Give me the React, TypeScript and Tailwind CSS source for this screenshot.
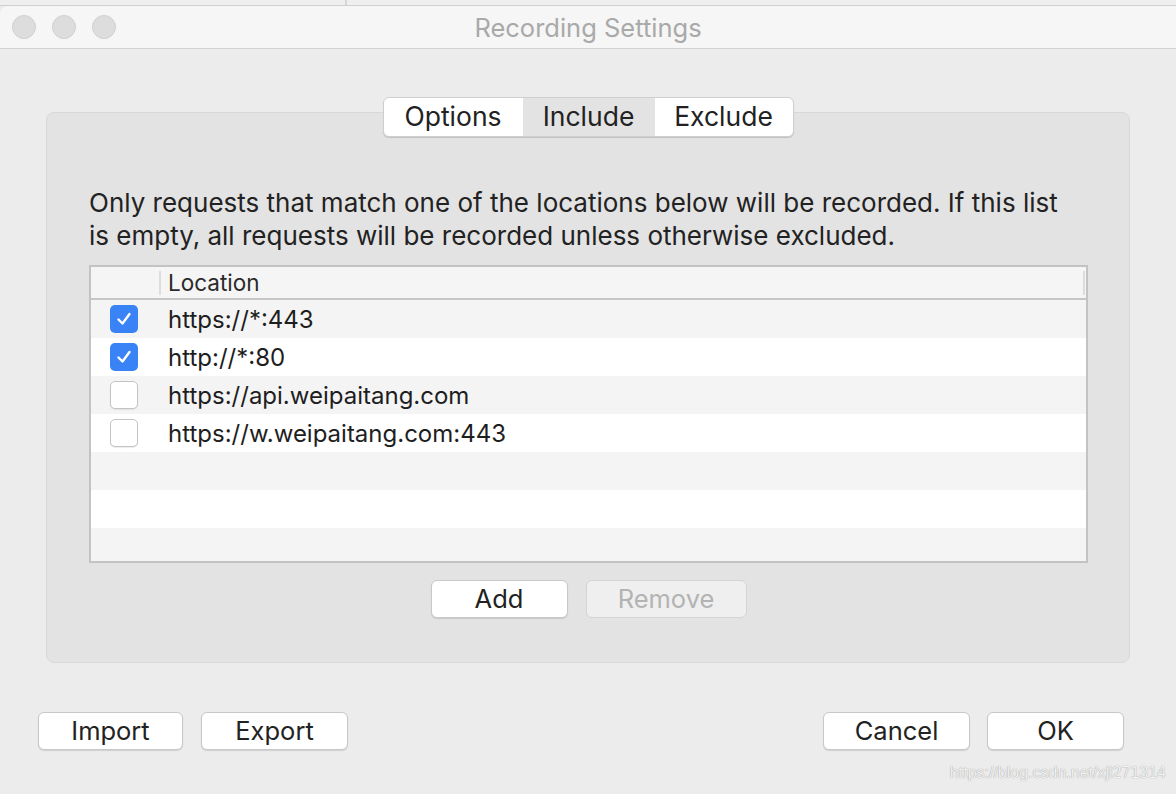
import React from "react";

const font = { fontFamily: 'Inter, "Liberation Sans", Arial, sans-serif' };

function Btn({ label, w, disabled }: { label: string; w: string; disabled?: boolean }) {
  return (
    <div
      className={`${w} h-[38px] flex items-center justify-center rounded-[6px] border text-[25.5px] ${
        disabled
          ? "bg-[#efefef] border-[#d4d4d4] text-[#b3b3b3]"
          : "bg-white border-[#c8c8c8] text-[#222] shadow-[0_1px_1px_rgba(0,0,0,0.12)]"
      }`}
    >
      {label}
    </div>
  );
}

function Check({ on }: { on: boolean }) {
  return on ? (
    <div className="w-[28px] h-[28px] rounded-[5px] bg-[#3a83f7] flex items-center justify-center">
      <svg width="18" height="18" viewBox="0 0 18 18">
        <path d="M3.5 9.5 L7.5 13.5 L14.5 4" fill="none" stroke="white" strokeWidth="2.4" strokeLinecap="round" strokeLinejoin="round" />
      </svg>
    </div>
  ) : (
    <div className="w-[28px] h-[28px] rounded-[5px] bg-white border border-[#c4c4c4] shadow-[0_1px_1px_rgba(0,0,0,0.08)]" />
  );
}

const rows: { on: boolean; text: string }[] = [
  { on: true, text: "https://*:443" },
  { on: true, text: "http://*:80" },
  { on: false, text: "https://api.weipaitang.com" },
  { on: false, text: "https://w.weipaitang.com:443" },
  { on: false, text: "" },
  { on: false, text: "" },
  { on: false, text: "" },
];

export default function App() {
  return (
    <div className="w-[1176px] h-[794px] bg-[#ececec] flex flex-col overflow-hidden relative text-[#222]" style={font}>
      {/* strip above window */}
      <div className="h-[6px] bg-[#efefef] border-b border-[#cfcfcf] flex">
        <div className="w-[347px] border-r-2 border-[#d6d6d6]" />
      </div>
      {/* title bar */}
      <div className="h-[43px] bg-[#f6f6f6] border-b border-[#d2d2d2] grid grid-cols-[1fr_auto_1fr] items-center rounded-tl-[8px]">
        <div className="flex items-center gap-[16px] pl-[12px]">
          <div className="w-[24px] h-[24px] rounded-full bg-[#dddddd] border border-[#d0d0d0]" />
          <div className="w-[24px] h-[24px] rounded-full bg-[#dddddd] border border-[#d0d0d0]" />
          <div className="w-[24px] h-[24px] rounded-full bg-[#dddddd] border border-[#d0d0d0]" />
        </div>
        <div className="text-[25.5px] text-[#a9a9a9] pt-[3px]">Recording Settings</div>
        <div />
      </div>
      {/* body */}
      <div className="flex flex-col items-center pt-[48px]">
        <div className="relative z-10 flex h-[40px] rounded-[6px] bg-white border border-[#cfcfcf] shadow-[0_1px_1px_rgba(0,0,0,0.15)] overflow-hidden text-[26.5px]">
          <div className="w-[139px] flex items-center justify-center">Options</div>
          <div className="w-[132px] flex items-center justify-center bg-[#e3e3e3]">Include</div>
          <div className="w-[138px] flex items-center justify-center">Exclude</div>
        </div>
        <div className="-mt-[25px] w-[1084px] h-[551px] bg-[#e3e3e3] border border-[#d8d8d8] rounded-[8px] flex flex-col pl-[42px] pt-[73px]">
          <div className="text-[26px] leading-[33px] w-[990px]">
            Only requests that match one of the locations below will be recorded. If this list is empty, all requests will be recorded unless otherwise excluded.
          </div>
          <div className="mt-[13px] w-[999px] h-[298px] border-2 border-[#c3c3c3] bg-[#f4f4f4] flex flex-col overflow-hidden">
            <div className="h-[33px] shrink-0 bg-[#f5f5f5] border-b-2 border-[#c6c6c6] flex items-center relative">
              <div className="w-[70px] h-[24px] border-r-2 border-[#dedede]" />
              <div className="pl-[7px] text-[22.5px] text-[#2a2a2a] flex-1">Location</div>
              <div className="w-[2px] h-[24px] bg-[#dcdcdc] mr-[1px]" />
            </div>
            {rows.map((r, i) => (
              <div
                key={i}
                className={`${i === 6 ? "h-[33px]" : "h-[38px]"} shrink-0 flex items-center ${i % 2 === 0 ? "bg-[#f4f4f4]" : "bg-white"}`}
              >
                {r.text ? (
                  <>
                    <div className="w-[77px] pl-[19px] flex items-center">
                      <Check on={r.on} />
                    </div>
                    <div className="text-[24px] text-[#1e1e1e] pt-[1px]">{r.text}</div>
                  </>
                ) : null}
              </div>
            ))}
          </div>
          <div className="w-[999px] flex justify-center gap-[18px] mt-[17px]">
            <Btn label="Add" w="w-[137px]" />
            <Btn label="Remove" w="w-[161px]" disabled />
          </div>
        </div>
        {/* bottom buttons */}
        <div className="w-full flex items-center mt-[49px] pl-[38px] pr-[52px]">
          <div className="flex gap-[18px]">
            <Btn label="Import" w="w-[145px]" />
            <Btn label="Export" w="w-[147px]" />
          </div>
          <div className="flex-1" />
          <div className="flex gap-[17px]">
            <Btn label="Cancel" w="w-[147px]" />
            <Btn label="OK" w="w-[137px]" />
          </div>
        </div>
      </div>
      <div
        className="absolute right-[10px] bottom-[9px] text-[16px] text-[#f2f2f2] [text-shadow:0_0_1px_rgba(0,0,0,0.45)]"
        style={{ fontFamily: '"Liberation Sans", Arial, sans-serif' }}
      >
        https://blog.csdn.net/xjl271314
      </div>
    </div>
  );
}
